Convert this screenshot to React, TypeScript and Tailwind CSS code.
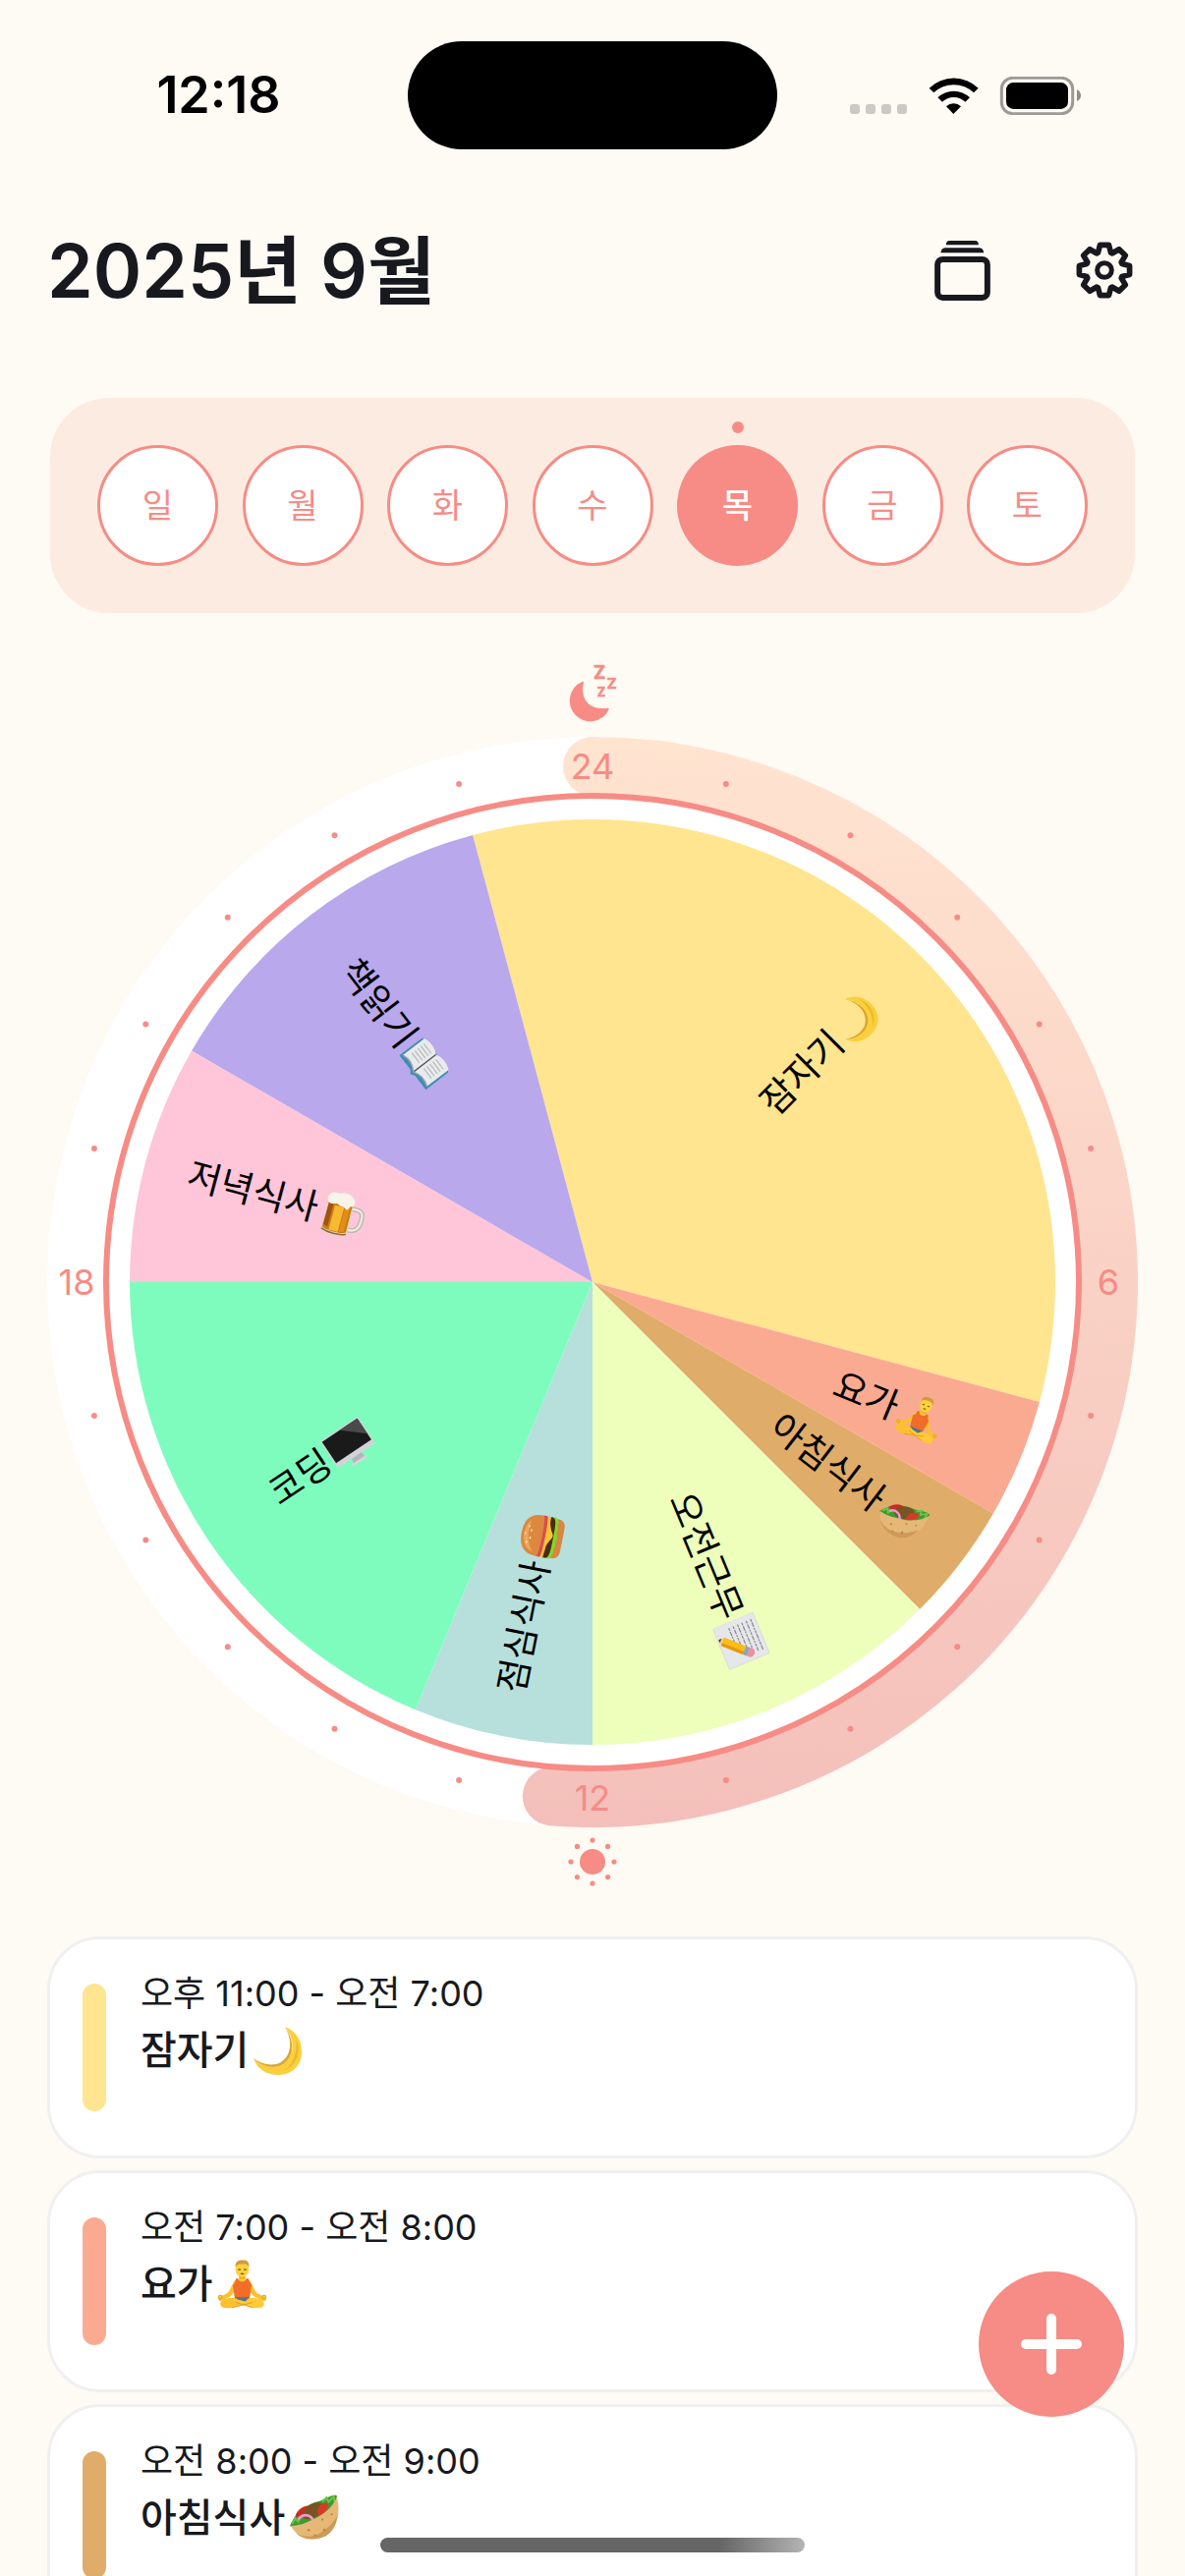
import type { ReactNode } from 'react';

type EmojiName = 'moon' | 'yoga' | 'wrap' | 'memo' | 'burger' | 'computer' | 'beer' | 'book';

type Slot = { name: string; emoji: EmojiName; from: number; to: number; color: string };

const CORAL = '#f68c85';

const days = ['일', '월', '화', '수', '목', '금', '토'];
const today = '목';

const slots: Slot[] = [
  { name: '잠자기', emoji: 'moon', from: -15, to: 105, color: '#ffe58f' },
  { name: '요가', emoji: 'yoga', from: 105, to: 120, color: '#fbaa92' },
  { name: '아침식사', emoji: 'wrap', from: 120, to: 135, color: '#e0ac69' },
  { name: '오전근무', emoji: 'memo', from: 135, to: 180, color: '#edffba' },
  { name: '점심식사', emoji: 'burger', from: 180, to: 202.5, color: '#b7e0dc' },
  { name: '코딩', emoji: 'computer', from: 202.5, to: 270, color: '#7efcbe' },
  { name: '저녁식사', emoji: 'beer', from: 270, to: 300, color: '#ffc5d9' },
  { name: '책읽기', emoji: 'book', from: 300, to: 345, color: '#b9a8eb' },
];

const agenda: { time: string; name: string; emoji: EmojiName; bar: string }[] = [
  { time: '오후 11:00 - 오전 7:00', name: '잠자기', emoji: 'moon', bar: 'bg-[#ffe58f]' },
  { time: '오전 7:00 - 오전 8:00', name: '요가', emoji: 'yoga', bar: 'bg-[#fbaa92]' },
  { time: '오전 8:00 - 오전 9:00', name: '아침식사', emoji: 'wrap', bar: 'bg-[#e0ac69]' },
];

/* Emoji artwork, each on a 48 x 48 grid */
const emojiArt: Record<EmojiName, ReactNode> = {
  moon: (
    <>
      <path d="M31 1C42 5 47 14 47 25C47 38 38 47 25 47C13 47 4 41 1 31C8 39 20 42 29 37C40 30 42 14 31 1Z" fill="#fbcf3b" />
      <path d="M31 1C41 15 40 30 29 37C20 42 8 39 1 31C9 37 19 39 27 35C37 29 39 15 31 1Z" fill="#d9a92f" />
      <path d="M42 13C47 25 42 38 30 43C39 37 43 26 42 13Z" fill="#eab92f" />
    </>
  ),
  yoga: (
    <>
      <path d="M17 21C14 23 13 29 10 32L2 36C0 38 2 41 5 39L13 35C17 31 18 27 19 24Z" fill="#fbc02d" />
      <path d="M31 21C34 23 35 29 38 32L46 36C48 38 46 41 43 39L35 35C31 31 30 27 29 24Z" fill="#fbc02d" />
      <path d="M21 14H27V21H21Z" fill="#e9a820" />
      <path d="M15 22C17 19 20 18 24 18C28 18 31 19 33 22L30 28H18Z" fill="#fdc934" />
      <path d="M18 18L20 18C21 22 27 22 28 18L30 18C31 22 32 23 33 24L31 38H17L15 24C17 23 17 22 18 18Z" fill="#f26c2a" />
      <path d="M17 36H31L32 42H16Z" fill="#5b7288" />
      <path d="M18 37C10 36 4 38 3 42C3 46 8 47 14 46L36 41C34 38 28 40 24 41Z" fill="#fbc02d" />
      <path d="M30 37C38 36 44 38 45 42C45 46 40 47 34 46L14 40C18 37 22 39 27 40Z" fill="#fdca38" />
      <path d="M17 40.500L34 46M34 41L14 46" stroke="#dc9a1b" strokeWidth="0.800" />
      <circle cx="3" cy="36" r="1.600" fill="none" stroke="#e9ab22" strokeWidth="1.400" />
      <circle cx="45" cy="36" r="1.600" fill="none" stroke="#e9ab22" strokeWidth="1.400" />
      <ellipse cx="24" cy="9" rx="6.500" ry="8" fill="#fdd23e" />
      <path d="M17.500 7C17 2 20 0 25 0.500C29 0 31 3 30.500 7C29 5 28 4 26 4C23 4.500 19 4 17.500 7Z" fill="#d39a3d" />
      <path d="M20 9.500H22.500M25.500 9.500H28M22.500 14Q24 12.500 25.500 14" stroke="#7a4a12" strokeWidth="1" fill="none" />
    </>
  ),
  wrap: (
    <>
      <path d="M1 31C5 20 16 10 30 7C38 3 43 1 46 2C46 10 35 22 22 29C14 33 6 34 1 31Z" fill="#3f9a32" />
      <path d="M3 29L6 24L9 27L12 20M32 8L36 4L38 8L43 3L44 9" stroke="#6cc24a" strokeWidth="2" fill="none" />
      <path d="M6 22C8 15 15 11 20 12L14 23Z" fill="#c62f24" />
      <path d="M14 22C14 13 23 7 30 9C35 12 31 22 22 24C18 25 14 25 14 22Z" fill="#765523" />
      <path d="M28 20C26 14 31 8 37 9C39 14 35 19 28 22Z" fill="#d63a28" />
      <path d="M9 25C13 19 20 20 23 25" stroke="#ee9ad0" strokeWidth="2.500" fill="none" />
      <path d="M2 31C12 31 20 26 27 23C36 18 44 10 46 3C50 20 46 32 36 40C25 46 9 45 2 31Z" fill="#e5b878" />
      <path d="M7 38C17 44 33 42 46 22C46 31 40 38 35 41C25 46 13 44 7 38Z" fill="#cf9a59" />
      <g fill="#bd8441">
        <circle cx="32" cy="25" r="1" />
        <circle cx="41" cy="20" r="1" />
        <circle cx="34" cy="35" r="1.300" />
        <circle cx="19" cy="35" r="1.200" />
        <circle cx="25" cy="40" r="1" />
      </g>
    </>
  ),
  memo: (
    <>
      <path d="M0 1H47V47H0Z" fill="#e6e7ea" stroke="#d0d2d6" strokeWidth="0.600" />
      <g stroke="#8a8b8f" strokeWidth="1.300" strokeDasharray="3 1 5 1 2 1">
        <path d="M6 6H41M6 11H40M6 16H41M6 21H37M6 26H30M6 31H24" />
      </g>
      <g transform="translate(7 0) rotate(-46 23 31) scale(0.95)">
        <path d="M6 26L1 31L6 36Z" fill="#eccb94" />
        <path d="M3.500 28.500L1 31L3.500 33.500Z" fill="#333" />
        <path d="M6 26H32V36H6Z" fill="#fbbc17" />
        <path d="M6 32.500H32V36H6Z" fill="#e29a10" />
        <path d="M32 26H37V36H32Z" fill="#8fa3b8" />
        <path d="M37 26H40C45 26 45 36 40 36H37Z" fill="#f08f9c" />
      </g>
    </>
  ),
  burger: (
    <>
      <path d="M3 35H45C46 43 42 46 36 46H12C6 46 2 43 3 35Z" fill="#d98642" />
      <path d="M2 33C8 31 14 32 24 32C34 32 42 30 46 33C47 36 44 37 42 39C39 36 37 40 33 39C30 37 28 41 24 40C20 38 17 41 14 39C10 38 9 40 6 38C3 38 1 35 2 33Z" fill="#79dd2b" />
      <path d="M2 28H46V32C44 36 38 36 24 36C10 36 4 36 2 32Z" fill="#4c2a16" />
      <path d="M3 25H45L46 30C40 29 34 31 28 35C24 37 20 30 12 30L2 29Z" fill="#fcc332" />
      <path d="M2 22H46V26C40 28 8 28 2 26Z" fill="#dd4b50" />
      <path d="M2 22C2 7 11 2 24 2C37 2 46 7 46 22C44 25 4 25 2 22Z" fill="#dc8840" />
      <path d="M6 17C8 8 15 5 24 5C31 5 36 7 39 10C29 8 15 9 6 17Z" fill="#eba75c" />
      <g fill="#fbe3b0">
        <ellipse cx="15" cy="9" rx="1.400" ry="0.800" />
        <ellipse cx="24" cy="6" rx="1.400" ry="0.800" />
        <ellipse cx="32" cy="9" rx="1.400" ry="0.800" />
        <ellipse cx="20" cy="12" rx="1.400" ry="0.800" />
        <ellipse cx="28" cy="12" rx="1.400" ry="0.800" />
      </g>
    </>
  ),
  computer: (
    <>
      <path d="M18 36H30L31 44H17Z" fill="#b4b7ba" />
      <path d="M14 43H34V45.500H14Z" fill="#d4d6d8" />
      <rect x="0" y="4" width="48" height="34" rx="1.500" fill="#d1d3d6" />
      <rect x="1.500" y="5.500" width="45" height="27" fill="#1a1a1a" />
      <path d="M24 5.500H46.500V25Z" fill="#4a4a4a" />
    </>
  ),
  beer: (
    <>
      <path d="M31 15H38C44 15 45 18 45 25C45 34 42 38 32 38" fill="none" stroke="#b9b6a9" strokeWidth="5" />
      <path d="M31 15H38C44 15 45 18 45 25C45 34 42 38 32 38" fill="none" stroke="#ece9dd" strokeWidth="2.400" />
      <path d="M6 9H33L34 43C30 48 9 48 5 43Z" fill="#dcd6c6" />
      <path d="M7 12H32L32.500 41C28 44 11 44 6.500 41Z" fill="#cf7a10" />
      <path d="M14 16H24V42.500H14Z" fill="#f7b930" />
      <path d="M25 14H30V41L25 42Z" fill="#e08f1a" />
      <path d="M7 13H12V40L7 38Z" fill="#a0540f" />
      <path d="M5 12C3 6 8 1 15 3C20 -1 28 0 31 4C35 6 35 12 31 13C29 13 29 19 26 17C23 14 20 17 17 14C13 13 9 18 5 12Z" fill="#f8f4e8" />
      <path d="M6 43C14 46 25 46 33 43" stroke="#8e6a38" strokeWidth="1.500" fill="none" />
    </>
  ),
  book: (
    <>
      <path d="M1 10L5 8H43L47 10V40H28L24 43L20 40H1Z" fill="#3d8fb2" />
      <path d="M3 8C10 5 18 5 24 9C30 5 38 5 45 8V37C38 34 30 35 24 39C18 35 10 34 3 37Z" fill="#e9eaec" />
      <path d="M24 9V39" stroke="#555a60" strokeWidth="1.500" />
      <path d="M3 37C10 34 18 35 24 39C30 35 38 34 45 37" stroke="#9fa3a8" strokeWidth="1.500" fill="none" />
      <path d="M7 12H20M7 16H20M7 20H20M7 24H20M7 28H20M28 12H41M28 16H41M28 20H41M28 24H41M28 28H41" stroke="#b5b7bb" strokeWidth="1.200" />
    </>
  ),
};

const polar = (cx: number, cy: number, r: number, deg: number) => {
  const a = (deg * Math.PI) / 180;
  return [(cx + r * Math.sin(a)).toFixed(2), (cy - r * Math.cos(a)).toFixed(2)];
};

const C = 555;
const PIE_R = 471;
const BAND_R = 525;
const GLYPH = 34;
const EMOJI = 46;
const EMOJI_BOX = 56;

const slicePath = (from: number, to: number) => {
  const [x1, y1] = polar(C, C, PIE_R, from);
  const [x2, y2] = polar(C, C, PIE_R, to);
  return `M${C} ${C}L${x1} ${y1}A${PIE_R} ${PIE_R} 0 0 1 ${x2} ${y2}Z`;
};

function SliceLabel({ slot }: { slot: Slot }) {
  const mid = (slot.from + slot.to) / 2;
  const flipped = mid > 180;
  const textWidth = slot.name.length * GLYPH;
  const center = PIE_R * 0.7;
  const start = (flipped ? -center : center) - (textWidth + EMOJI_BOX) / 2;
  return (
    <g transform={`translate(${C} ${C}) rotate(${flipped ? mid + 90 : mid - 90})`}>
      <text x={start} y={13} fontSize={37} fill="#000">
        {slot.name}
      </text>
      <svg x={start + textWidth + 3} y={-EMOJI / 2} width={EMOJI} height={EMOJI} viewBox="0 0 48 48">
        {emojiArt[slot.emoji]}
      </svg>
    </g>
  );
}

function Wheel() {
  const [endX, endY] = polar(C, C, BAND_R, 184.5);
  const hours = Array.from({ length: 24 }, (_, i) => i);
  return (
    <svg viewBox="0 0 1110 1110" className="mt-[15px] block h-auto w-full" role="img" aria-label="하루 일과표">
      <defs>
        <linearGradient id="band" gradientUnits="userSpaceOnUse" x1="0" y1="0" x2="0" y2="1110">
          <stop offset="0" stopColor="#ffe4d0" />
          <stop offset="1" stopColor="#f4bfba" />
        </linearGradient>
      </defs>
      <circle cx={C} cy={C} r={555} fill="#fff" />
      <path
        d={`M${C} ${C - BAND_R}A${BAND_R} ${BAND_R} 0 1 1 ${endX} ${endY}`}
        fill="none"
        stroke="url(#band)"
        strokeWidth={60}
        strokeLinecap="round"
      />
      <circle cx={C} cy={C} r={495} fill="#fff" stroke={CORAL} strokeWidth={6} />
      {hours.map((h) => {
        const [x, y] = polar(C, C, BAND_R, h * 15);
        return h % 6 === 0 ? (
          <text key={h} x={x} y={Number(y) + 13} fontSize={36} textAnchor="middle" fill={CORAL}>
            {h === 0 ? 24 : h}
          </text>
        ) : (
          <circle key={h} cx={x} cy={y} r={3} fill={CORAL} />
        );
      })}
      {slots.map((s) => (
        <path key={s.name} d={slicePath(s.from, s.to)} fill={s.color} />
      ))}
      {slots.map((s) => (
        <SliceLabel key={s.name} slot={s} />
      ))}
    </svg>
  );
}

function StatusBar() {
  return (
    <div className="grid shrink-0 grid-cols-[1fr_376px_1fr] items-center pt-[42px]">
      <div className="flex justify-center pl-[30px] text-[52px] leading-none font-semibold text-black">12:18</div>
      <div className="h-[110px] rounded-full bg-black" />
      <div className="flex justify-center pr-8">
        <svg className="h-[39px] w-[235px]" viewBox="75 114 705 117" aria-hidden="true">
          <g fill="#cbc9c5">
            <rect x="75" y="198" width="30" height="30" rx="9" />
            <rect x="123" y="198" width="30" height="30" rx="9" />
            <rect x="171" y="198" width="30" height="30" rx="9" />
            <rect x="219" y="198" width="30" height="30" rx="9" />
          </g>
          <path d="M317 149A108 108 0 0 1 467 149L453 163A88 88 0 0 0 331 163Z" />
          <path d="M343 178A70 70 0 0 1 441 178L427 191A50 50 0 0 0 357 191Z" />
          <path d="M369 205A32 32 0 0 1 414 205L391 228Z" />
          <rect x="538" y="118" width="217" height="109" rx="34" fill="none" stroke="#9c9a97" strokeWidth="9" />
          <rect x="552" y="132" width="189" height="81" rx="22" />
          <path d="M768 154C784 160 784 183 768 189Z" fill="#8f8d8a" />
        </svg>
      </div>
    </div>
  );
}

const gearPoints = Array.from({ length: 8 }, (_, i) => i * 45)
  .flatMap((a) => [
    polar(0, 0, 57, a - 20),
    polar(0, 0, 78, a - 10),
    polar(0, 0, 78, a + 10),
    polar(0, 0, 57, a + 20),
  ])
  .map((p) => p.join(','))
  .join(' ');

function Header() {
  return (
    <header className="mx-12 mt-[67px] flex h-28 shrink-0 items-center justify-between text-[#17191e]">
      <h1 className="text-[75px] leading-none font-semibold">2025년 9월</h1>
      <div className="flex items-center gap-[87px] pr-[5px]">
        <button type="button" aria-label="보관함">
          <svg className="h-[61px] w-[57px]" viewBox="333 611 171 184" fill="currentColor">
            <path d="M368 624C368 615 372 611 379 611H457C464 611 468 615 468 624Z" />
            <path d="M352 648C353 638 358 633 366 633H470C478 633 483 638 484 648Z" />
            <rect x="342" y="668" width="153" height="118" rx="16" fill="none" stroke="currentColor" strokeWidth="18" />
          </svg>
        </button>
        <button type="button" aria-label="설정">
          <svg className="h-[58px] w-[58px]" viewBox="-87 -87 174 174" fill="none" stroke="currentColor" strokeLinejoin="round">
            <polygon points={gearPoints} strokeWidth="17" />
            <circle r="22" strokeWidth="15" />
          </svg>
        </button>
      </div>
    </header>
  );
}

function WeekPicker() {
  return (
    <nav className="mx-[51px] mt-[74px] flex h-[219px] shrink-0 items-center justify-between rounded-[60px] bg-[#fcebe1] px-12">
      {days.map((d) =>
        d === today ? (
          <button
            key={d}
            type="button"
            aria-current="date"
            className="relative size-[123px] rounded-full bg-[#f68c85] text-[34px] font-medium text-white"
          >
            <span className="absolute -top-6 left-1/2 size-3 -translate-x-1/2 rounded-full bg-[#f68c85]" />
            {d}
          </button>
        ) : (
          <button
            key={d}
            type="button"
            className="size-[123px] rounded-full border-3 border-[#f68c85] bg-white text-[34px] text-[#f68c85]"
          >
            {d}
          </button>
        ),
      )}
    </nav>
  );
}

function NightIcon() {
  return (
    <svg
      className="mt-[54px] h-[57px] w-12 overflow-visible"
      viewBox="117 54 144 171"
      fill={CORAL}
      fontWeight="700"
      aria-hidden="true"
    >
      <path d="M157 102Q163 99 162 105C151 150 175 190 233 182Q241 180 239 187A63 63 0 1 1 157 102Z" />
      <g stroke={CORAL} strokeWidth="2">
        <text x="192" y="94" fontSize="55">Z</text>
        <text x="233" y="122" fontSize="44">Z</text>
        <text x="203" y="147" fontSize="38">Z</text>
      </g>
    </svg>
  );
}

function SunIcon() {
  return (
    <svg className="mt-[10px] size-[50px]" viewBox="-25 -25 50 50" fill={CORAL} aria-hidden="true">
      <circle r="13" />
      {[0, 45, 90, 135, 180, 225, 270, 315].map((a) => {
        const [x, y] = polar(0, 0, 22, a);
        return <circle key={a} cx={x} cy={y} r="2.600" />;
      })}
    </svg>
  );
}

export default function App() {
  return (
    <div className="relative flex h-screen flex-col overflow-hidden bg-[#fefaf4] font-['Inter','Noto_Sans_CJK_KR',sans-serif]">
      <StatusBar />
      <Header />
      <WeekPicker />
      <main className="flex shrink-0 flex-col items-center px-12">
        <NightIcon />
        <Wheel />
        <SunIcon />
        <ul className="mt-[51px] flex w-full flex-col gap-3">
          {agenda.map((item) => (
            <li
              key={item.time}
              className="flex h-[226px] items-center gap-[35px] rounded-[54px] border-3 border-[#f0f0f0] bg-white pl-[33px]"
            >
              <span className={`h-[130px] w-6 rounded-full ${item.bar}`} />
              <div className="self-start pt-[31px] text-[#17191e]">
                <p className="text-[36px] leading-[48px]">{item.time}</p>
                <p className="mt-1 flex items-center gap-1 text-[40px] leading-[60px] font-medium">
                  {item.name}
                  <svg className="size-[51px]" viewBox="0 0 48 48" aria-hidden="true">
                    {emojiArt[item.emoji]}
                  </svg>
                </p>
              </div>
            </li>
          ))}
        </ul>
      </main>
      <button
        type="button"
        aria-label="일정 추가"
        className="absolute right-[62px] bottom-[162px] flex size-[148px] items-center justify-center rounded-full bg-[#f68c85]"
      >
        <svg className="size-[62px]" viewBox="0 0 62 62" stroke="#fff" strokeWidth="10" strokeLinecap="round">
          <path d="M31 5V57M5 31H57" />
        </svg>
      </button>
      <div className="absolute bottom-6 left-1/2 h-[15px] w-[432px] -translate-x-1/2 rounded-full bg-linear-to-r from-[#666] from-80% to-[#b4b4b4]" />
    </div>
  );
}
